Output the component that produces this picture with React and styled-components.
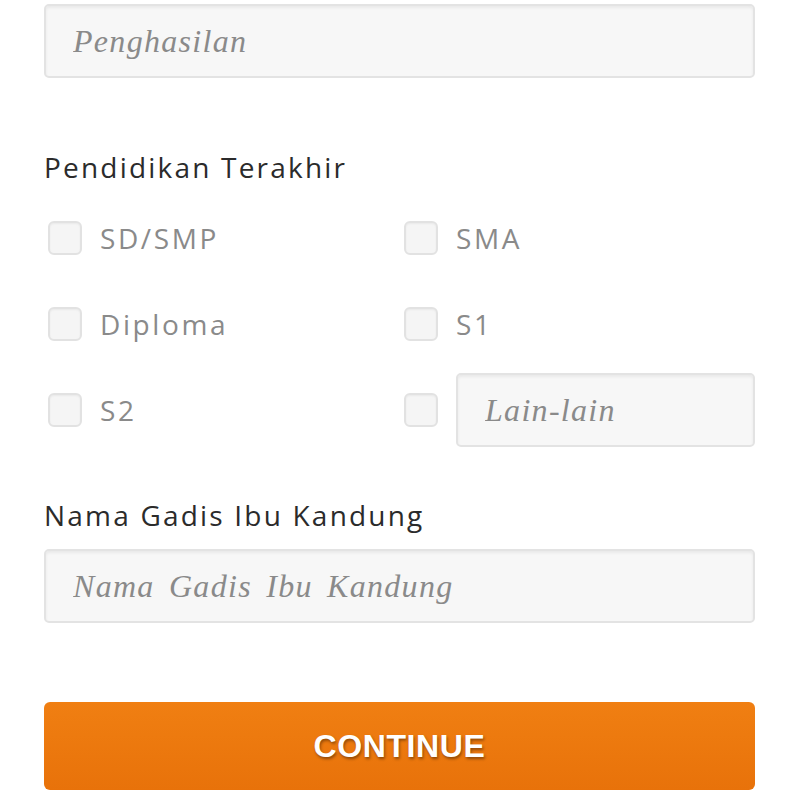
import * as React from "react";
import styled, { createGlobalStyle } from "styled-components";

const GlobalStyle = createGlobalStyle`
  body {
    margin: 0;
    background: #ffffff;
    font-family: "Open Sans", "Liberation Sans", sans-serif;
  }
`;

const Form = styled.form`
  width: 711px;
  padding: 4px 0 0 44px;
  display: flex;
  flex-direction: column;
`;

const TextInput = styled.input`
  box-sizing: border-box;
  width: ${(p) => p.width || "100%"};
  height: 74px;
  border: 2px solid #e3e3e3;
  border-radius: 5px;
  background: #f7f7f7;
  box-shadow: inset 0 2px 3px rgba(0, 0, 0, 0.06);
  padding: 0 0 0 27px;
  font-family: "Liberation Serif", serif;
  font-style: italic;
  font-size: 32px;
  letter-spacing: 1.3px;
  word-spacing: 5px;
  color: #555;
  outline: none;
  &::placeholder {
    color: #8a8a8a;
  }
`;

const Label = styled.div`
  font-size: 28px;
  line-height: 34px;
  letter-spacing: 2.2px;
  color: #2b2b2b;
  margin-top: ${(p) => p.top}px;
  margin-bottom: 17px;
`;

const Grid = styled.div`
  display: grid;
  grid-template-columns: 356px 1fr;
  grid-auto-rows: 74px;
  row-gap: 12px;
  padding-left: 4px;
`;

const Option = styled.label`
  display: flex;
  align-items: center;
  gap: 18px;
  font-size: 28px;
  letter-spacing: 2.6px;
  color: #8a8a8a;
`;

const Box = styled.span`
  box-sizing: border-box;
  width: 34px;
  height: 34px;
  flex: none;
  border: 2px solid #e2e2e2;
  border-radius: 6px;
  background: #f5f5f5;
  box-shadow: inset 0 1px 2px rgba(0, 0, 0, 0.05);
`;

const Button = styled.button`
  margin-top: 79px;
  height: 88px;
  width: 100%;
  border: none;
  border-radius: 6px;
  background: linear-gradient(#f07f12, #e8720a);
  color: #fff;
  font-family: "Liberation Sans", Arial, sans-serif;
  font-weight: bold;
  font-size: 32px;
  letter-spacing: 0.6px;
  text-shadow: 1px 2px 3px rgba(0, 0, 0, 0.4);
`;

const options = ["SD/SMP", "SMA", "Diploma", "S1", "S2"];

export default function App() {
  return (
    <React.Fragment>
      <GlobalStyle />
      <Form onSubmit={(e) => e.preventDefault()}>
        <TextInput placeholder="Penghasilan" />
        <Label top={72}>Pendidikan Terakhir</Label>
        <Grid>
          {options.map((o) => (
            <Option key={o}>
              <Box />
              {o}
            </Option>
          ))}
          <Option>
            <Box />
            <TextInput placeholder="Lain-lain" width="299px" />
          </Option>
        </Grid>
        <Label top={51}>Nama Gadis Ibu Kandung</Label>
        <TextInput placeholder="Nama Gadis Ibu Kandung" />
        <Button type="button">CONTINUE</Button>
      </Form>
    </React.Fragment>
  );
}
